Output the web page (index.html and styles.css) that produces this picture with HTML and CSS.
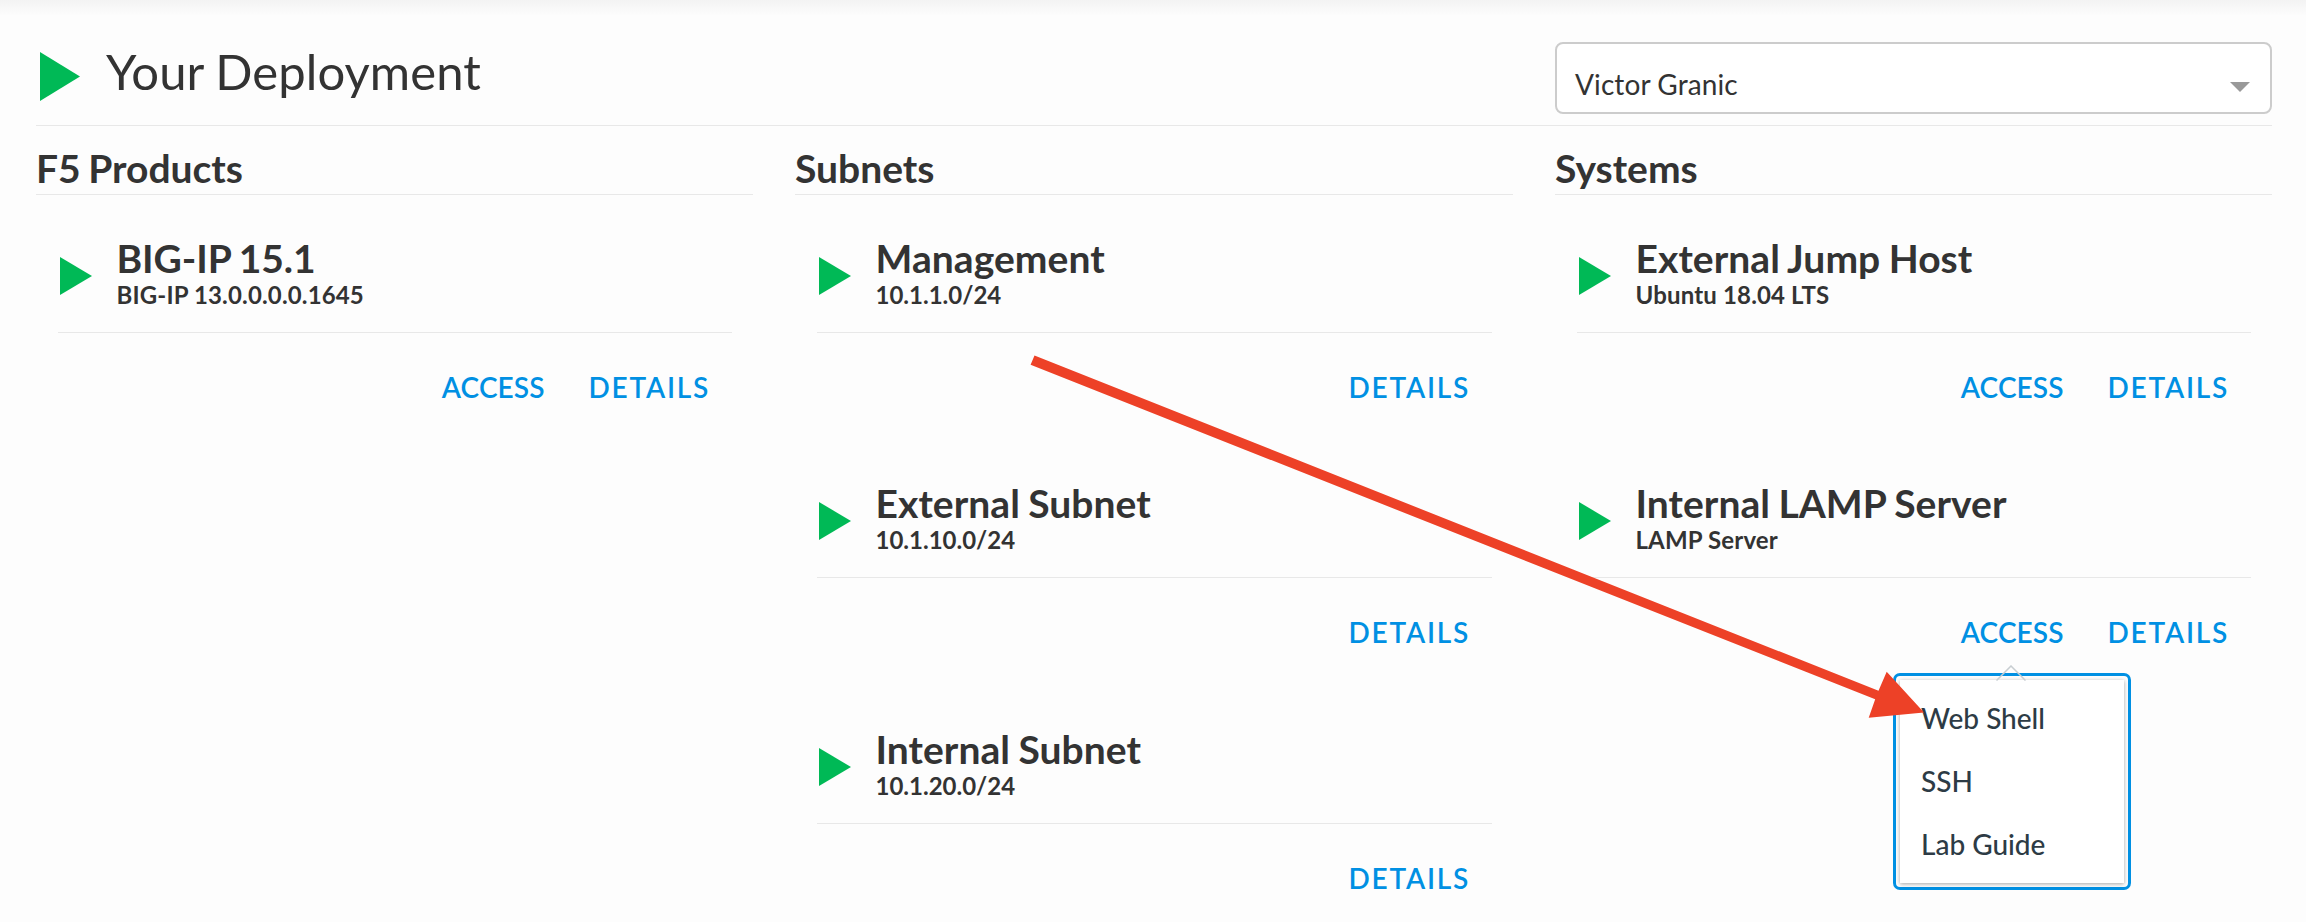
FILE: index.html
```html
<!DOCTYPE html>
<html lang="en">
<head>
<meta charset="utf-8">
<title>Your Deployment</title>
<link rel="stylesheet" href="styles.css">
</head>
<body>
<header class="topbar">
  <svg class="play-large" viewBox="0 0 40 49"><path d="M0 0L40 24.5L0 49z"/></svg>
  <h1 class="title">Your Deployment</h1>
  <div class="select"><span>Victor Granic</span><svg class="chevron" viewBox="0 0 20 10"><path d="M0 0H20L10 10z"/></svg></div>
</header>
<main class="columns">
  <section class="column">
    <h2 class="heading">F5 Products</h2>
    <article class="card">
      <div class="info"><svg class="play" viewBox="0 0 32 38"><path d="M0 0L32 19L0 38z"/></svg><div><h3 class="name numeric">BIG-IP 15.1</h3><p class="sub">BIG-IP 13.0.0.0.0.1645</p></div></div>
      <div class="actions"><a class="access">ACCESS</a><a class="details">DETAILS</a></div>
    </article>
  </section>
  <section class="column">
    <h2 class="heading">Subnets</h2>
    <article class="card">
      <div class="info"><svg class="play" viewBox="0 0 32 38"><path d="M0 0L32 19L0 38z"/></svg><div><h3 class="name">Management</h3><p class="sub address">10.1.1.0/24</p></div></div>
      <div class="actions"><a class="details">DETAILS</a></div>
    </article>
    <article class="card">
      <div class="info"><svg class="play" viewBox="0 0 32 38"><path d="M0 0L32 19L0 38z"/></svg><div><h3 class="name">External Subnet</h3><p class="sub address">10.1.10.0/24</p></div></div>
      <div class="actions"><a class="details">DETAILS</a></div>
    </article>
    <article class="card">
      <div class="info"><svg class="play" viewBox="0 0 32 38"><path d="M0 0L32 19L0 38z"/></svg><div><h3 class="name">Internal Subnet</h3><p class="sub address">10.1.20.0/24</p></div></div>
      <div class="actions"><a class="details">DETAILS</a></div>
    </article>
  </section>
  <section class="column">
    <h2 class="heading">Systems</h2>
    <article class="card">
      <div class="info"><svg class="play" viewBox="0 0 32 38"><path d="M0 0L32 19L0 38z"/></svg><div><h3 class="name">External Jump Host</h3><p class="sub">Ubuntu 18.04 LTS</p></div></div>
      <div class="actions"><a class="access">ACCESS</a><a class="details">DETAILS</a></div>
    </article>
    <article class="card">
      <div class="info"><svg class="play" viewBox="0 0 32 38"><path d="M0 0L32 19L0 38z"/></svg><div><h3 class="name">Internal LAMP Server</h3><p class="sub">LAMP Server</p></div></div>
      <div class="actions"><a class="access">ACCESS</a><a class="details">DETAILS</a></div>
    </article>
  </section>
</main>
<div class="menu">
  <ul class="menu-list"><li>Web Shell</li><li>SSH</li><li>Lab Guide</li></ul>
  <svg class="menu-caret" viewBox="0 0 30 16"><path d="M0.5 15.5L15 1L29.5 15.5"/></svg>
</div>
<svg class="pointer" viewBox="0 0 2306 922"><path d="M1034.5 355.5L1878.5 690.8L1886.7 671.7L1924 712.5L1868.7 717.8L1875.2 699.3L1030.6 364.8z"/></svg>
</body>
</html>
```
FILE: styles.css
```css
* { box-sizing: border-box; margin: 0; padding: 0; }
body {
  position: relative;
  height: 922px;
  padding: 0 34px 0 36px;
  overflow: hidden;
  background: linear-gradient(#f3f3f3, #fdfdfd 16px);
  color: #333;
  font-family: Lato, "Liberation Sans", sans-serif;
}
svg { display: block; }
.topbar { display: flex; height: 126px; border-bottom: 1px solid #e8e8e8; }
.play-large { width: 40px; height: 49px; margin: 52px 0 0 4px; fill: #00b956; }
.title { margin: 41px 0 0 26px; font-size: 49px; line-height: 60px; font-weight: 400; letter-spacing: 0.1px; word-spacing: -1px; }
.select {
  display: flex; justify-content: space-between;
  width: 717px; height: 72px; margin: 42px 0 0 auto; padding: 21px 20px 0 18px;
  border: 2px solid #ccc; border-radius: 8px; background: #fff;
  font-size: 28px; line-height: 38px; letter-spacing: 0.1px;
}
.chevron { width: 20px; height: 10px; margin-top: 17px; fill: #999; }
.columns { display: grid; grid-template-columns: 717px 718px 717px; column-gap: 42px; }
.heading { height: 69px; padding-top: 18px; border-bottom: 1px solid #e8e8e8; font-size: 39px; line-height: 48px; font-weight: 700; word-spacing: -2px; }
.card { height: 245.4px; padding: 0 21px 0 22px; }
.info { display: flex; height: 138px; padding-top: 39px; border-bottom: 1px solid #e8e8e8; }
.play { width: 32px; height: 38px; margin: 23px 24.5px 0 2px; fill: #00b956; }
.name { font-size: 39px; line-height: 48px; font-weight: 700; letter-spacing: 0.05px; word-spacing: -1.2px; }
.numeric { letter-spacing: -0.1px; }
.sub { margin-top: -2px; font-size: 24px; line-height: 30px; font-weight: 700; letter-spacing: 0.15px; }
.address { letter-spacing: 0; }
.actions { display: flex; justify-content: flex-end; gap: 44px; padding: 36px 22px 0 0; color: #0090e3; font-size: 28px; line-height: 36px; font-weight: 600; }
.access { letter-spacing: 0.1px; }
.details { letter-spacing: 1.75px; }
.menu {
  position: absolute; left: 1893px; top: 673px; width: 238px; height: 217px; padding: 4px;
  border: 3px solid #0090e3; border-radius: 7px; background: #fdfdfd;
}
.menu-list {
  height: 203px; padding-left: 21px; list-style: none; background: #fff;
  box-shadow: 0 1px 4px rgba(0,0,0,.35);
  color: #2d3b45; font-size: 28px; line-height: 63px; font-weight: 500;
  padding-top: 7px;
}
.menu-caret { position: absolute; left: 100px; top: -11px; width: 30px; height: 16px; fill: none; stroke: #c7cdd1; stroke-width: 1.5; }
.pointer { position: absolute; left: 0; top: 0; width: 2306px; height: 922px; fill: #ed4127; pointer-events: none; }
```
